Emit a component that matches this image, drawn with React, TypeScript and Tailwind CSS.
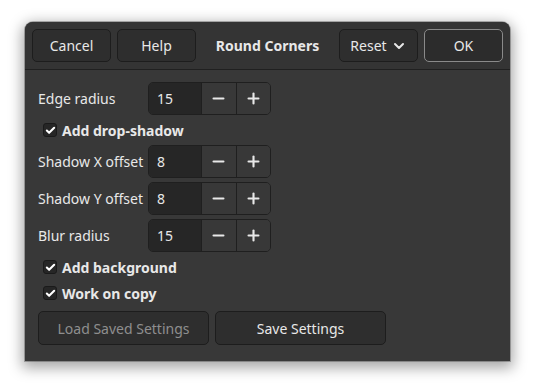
import { Check, ChevronDown, Minus, Plus } from "lucide-react";

const font = "font-['Noto_Sans',_'Open_Sans',_sans-serif]";

function HeaderButton({ label, ok }: { label: string; ok?: boolean }) {
  return (
    <button
      className={`flex h-[33px] w-[79px] items-center justify-center rounded-[5px] border text-[14px] text-[#e8e8e8] ${
        ok ? "border-[#8a8a8a] bg-[#2c2c2c]" : "border-[#1d1d1d] bg-[#2e2e2e]"
      }`}
    >
      {label}
    </button>
  );
}

function SpinRow({ label, value }: { label: string; value: string }) {
  return (
    <div className="flex h-[33px] items-center">
      <span className="w-[110px] text-[14px] text-[#e8e8e8]">{label}</span>
      <div className="flex h-[33px] w-[123px] overflow-hidden rounded-[5px] border border-[#1f1f1f]">
        <div className="flex w-[53px] items-center bg-[#262626] pl-[8px] text-[14px] text-[#e8e8e8]">
          {value}
        </div>
        <div className="flex w-[35px] items-center justify-center border-l border-[#1f1f1f] bg-[#383838] text-[#e8e8e8]">
          <Minus size={17} strokeWidth={3} />
        </div>
        <div className="flex w-[35px] items-center justify-center border-l border-[#1f1f1f] bg-[#383838] text-[#e8e8e8]">
          <Plus size={17} strokeWidth={3} />
        </div>
      </div>
    </div>
  );
}

function CheckRow({ label }: { label: string }) {
  return (
    <div className="flex h-[22px] items-center pl-[5px]">
      <span className="flex h-[14px] w-[14px] items-center justify-center rounded-[3px] border border-[#1a1a1a] bg-[#262626] text-white">
        <Check size={11} strokeWidth={4.5} />
      </span>
      <span className="ml-[5px] text-[14px] font-bold text-[#e8e8e8]">{label}</span>
    </div>
  );
}

export default function App() {
  return (
    <div className={`h-[389px] w-[535px] bg-white pl-[25px] pt-[22px] ${font}`}>
      <div className="flex h-[339px] w-[485px] flex-col rounded-t-[8px] bg-[#383838] shadow-[0_4px_14px_3px_rgba(0,0,0,0.35),0_0_0_1px_rgba(0,0,0,0.25)]">
        <div className="flex h-[48px] items-center justify-between rounded-t-[8px] border-b border-[#202020] bg-[#343434] px-[7px]">
          <div className="flex gap-[6px]">
            <HeaderButton label="Cancel" />
            <HeaderButton label="Help" />
          </div>
          <span className="text-[14px] font-bold text-[#e8e8e8]">Round Corners</span>
          <div className="flex gap-[6px]">
            <button className="flex h-[33px] w-[79px] items-center justify-center gap-[4px] rounded-[5px] border border-[#1d1d1d] bg-[#2e2e2e] text-[14px] text-[#e8e8e8]">
              Reset
              <ChevronDown size={16} strokeWidth={3} />
            </button>
            <HeaderButton label="OK" ok />
          </div>
        </div>
        <div className="flex flex-col gap-[4px] px-[13px] pt-[12px]">
          <SpinRow label="Edge radius" value="15" />
          <CheckRow label="Add drop-shadow" />
          <SpinRow label="Shadow X offset" value="8" />
          <SpinRow label="Shadow Y offset" value="8" />
          <SpinRow label="Blur radius" value="15" />
          <CheckRow label="Add background" />
          <CheckRow label="Work on copy" />
          <div className="mt-[3px] flex gap-[6px]">
            <button className="flex h-[34px] w-[171px] items-center justify-center rounded-[5px] border border-[#1d1d1d] bg-[#2e2e2e] text-[14px] text-[#8e8e8e]">
              Load Saved Settings
            </button>
            <button className="flex h-[34px] w-[171px] items-center justify-center rounded-[5px] border border-[#1d1d1d] bg-[#2e2e2e] text-[14px] text-[#e8e8e8]">
              Save Settings
            </button>
          </div>
        </div>
      </div>
    </div>
  );
}
